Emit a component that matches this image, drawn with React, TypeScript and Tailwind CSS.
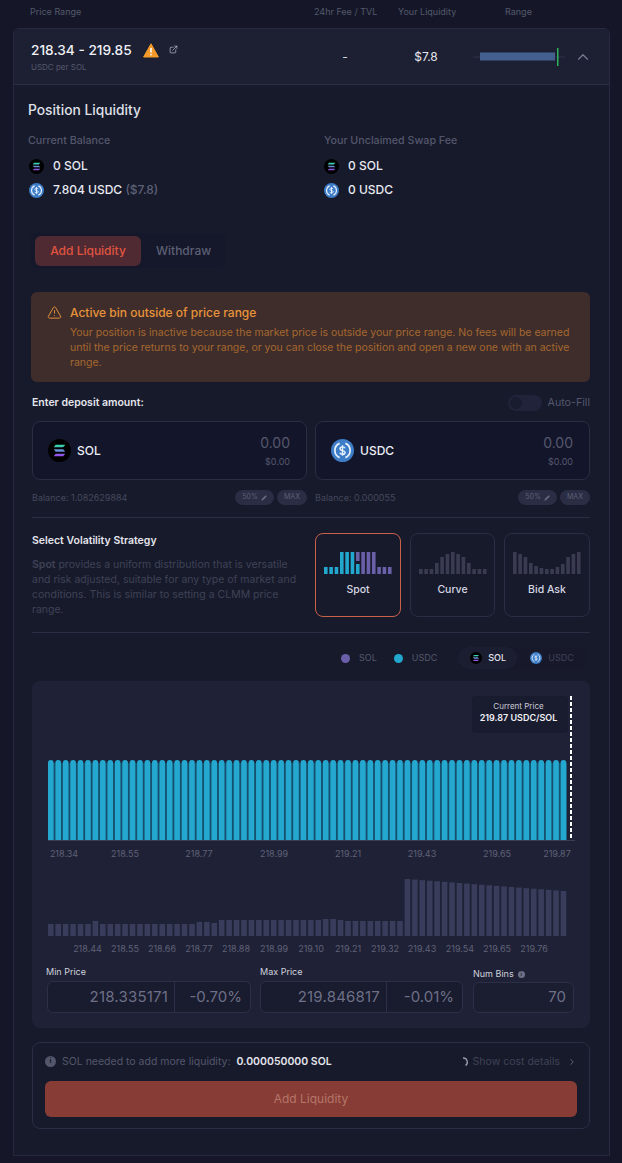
import { ChevronRight, ChevronUp, ExternalLink, Pencil, TriangleAlert } from "lucide-react";

const SolIcon = ({ size = 15 }: { size?: number }) => (
  <svg width={size} height={size} viewBox="0 0 24 24" className="shrink-0">
    <defs>
      <linearGradient id="solgrad" x1="0" y1="0" x2="0" y2="1">
        <stop offset="0" stopColor="#2fe0a8" />
        <stop offset="0.5" stopColor="#6a8fd8" />
        <stop offset="1" stopColor="#9a45f0" />
      </linearGradient>
    </defs>
    <circle cx="12" cy="12" r="12" fill="#000" />
    <path d="M8 6h10l-2.2 2.6H6zM6 10.7h9.8l2.2 2.6H8zM8 15.4h10l-2.2 2.6H6z" fill="url(#solgrad)" />
  </svg>
);

const UsdcIcon = ({ size = 15 }: { size?: number }) => (
  <svg width={size} height={size} viewBox="0 0 24 24" className="shrink-0">
    <circle cx="12" cy="12" r="12" fill="#3d7dc8" />
    <path d="M9 4.6a8 8 0 0 0 0 14.8M15 4.6a8 8 0 0 1 0 14.8" fill="none" stroke="#e6f0fb" strokeWidth="1.8" />
    <path d="M14.6 9.6c-.4-1-1.3-1.4-2.6-1.4-1.5 0-2.6.7-2.6 1.9 0 2.8 5.3 1.2 5.3 3.9 0 1.2-1.2 1.9-2.7 1.9s-2.4-.6-2.7-1.6M12 6.6v10.8" fill="none" stroke="#e6f0fb" strokeWidth="1.5" />
  </svg>
);

const spotBars = [7, 7, 7, 22, 22, 22, 22, 22, 22, 22, 7, 7, 7];
const curveBars = [5, 5, 5, 11, 17, 20, 22, 20, 17, 11, 5, 5, 5];
const bidAskBars = [22, 20, 17, 11, 8, 6, 5, 5, 7, 10, 17, 20, 22];

const MiniChart = ({ kind }: { kind: "spot" | "curve" | "bid" }) => {
  const bars = kind === "spot" ? spotBars : kind === "curve" ? curveBars : bidAskBars;
  return (
    <svg width="70" height="22" viewBox="0 0 70 22">
      {bars.map((h, i) => {
        const x = 1 + i * 5.33;
        if (kind === "spot" && i === 6) {
          return (
            <g key={i}>
              <rect x={x} y={0} width="3.6" height="9" fill="#6a60a9" />
              <rect x={x} y={12} width="3.6" height="10" fill="#22a8cf" />
            </g>
          );
        }
        const fill = kind === "spot" ? (i < 6 ? "#22a8cf" : "#6a60a9") : "#3a3b50";
        return <rect key={i} x={x} y={22 - h} width="3.6" height={h} fill={fill} />;
      })}
    </svg>
  );
};

const BIN_PITCH = 7.43;
const bins = Array.from({ length: 70 }, (_, i) => i);

const topLabels: [string, number][] = [
  ["218.34", 32],
  ["218.55", 93],
  ["218.77", 167],
  ["218.99", 242],
  ["219.21", 316],
  ["219.43", 390],
  ["219.65", 465],
  ["219.87", 525],
];

const lowerLabels: [string, number][] = [
  ["218.44", 55.5],
  ["218.55", 93],
  ["218.66", 130],
  ["218.77", 167],
  ["218.88", 204],
  ["218.99", 242],
  ["219.10", 279],
  ["219.21", 316],
  ["219.32", 353],
  ["219.43", 390],
  ["219.54", 428],
  ["219.65", 465],
  ["219.76", 502],
];

const smallHeights = [
  12, 12, 12, 12, 12, 12, 15, 12, 12, 12, 12, 12, 12, 12, 12, 12, 12, 12, 12, 12, 14, 14, 13, 16, 16, 16, 16, 16, 16, 16,
  16, 16, 16, 16, 16, 16, 16, 17, 17, 16, 15, 15, 15, 15, 15, 15, 15, 15,
];

const lowerHeight = (i: number) => (i < 48 ? smallHeights[i] : 57 - ((i - 48) * 12) / 21);

const PriceBox = ({ value, pct, width }: { value: string; pct: string; width: string }) => (
  <div className={`flex h-[32px] ${width} rounded-md border border-[#2c2f48] bg-[#191b2e] text-[15px] text-[#6d7086]`}>
    <div className="flex flex-1 items-center justify-end border-r border-[#2c2f48] pr-[6px] pt-[1px] tracking-[0.2px]">{value}</div>
    <div className="flex w-[75px] items-center justify-end pr-[8px] pt-[1px]">{pct}</div>
  </div>
);

const TokenInput = ({ icon, name }: { icon: React.ReactNode; name: string }) => (
  <div className="flex h-[59px] w-[275px] items-center justify-between rounded-lg border border-[#2a2d44] bg-[#13152a] pl-[15px] pr-[16px]">
    <div className="flex items-center gap-[6px] text-[12px] font-medium text-[#eceef5]">
      {icon}
      {name}
    </div>
    <div className="flex flex-col items-end">
      <span className="text-[14px] leading-[20px] text-[#55586d]">0.00</span>
      <span className="mt-[3px] text-[9px] leading-[12px] text-[#55586d]">$0.00</span>
    </div>
  </div>
);

const BalanceRow = ({ balance }: { balance: string }) => (
  <div className="flex h-[15px] w-[275px] items-center justify-between">
    <span className="pt-[1px] text-[9px] text-[#45485c]">{balance}</span>
    <div className="flex gap-[3px]">
      <span className="flex h-[15px] w-[39px] items-center justify-center gap-[3px] rounded-full bg-[#2a2d44] text-[7px] text-[#5d6075]">
        50%
        <Pencil size={6} fill="#6d7086" strokeWidth={1} />
      </span>
      <span className="flex h-[15px] w-[30px] items-center justify-center rounded-full bg-[#2a2d44] text-[7px] text-[#5d6075]">
        MAX
      </span>
    </div>
  </div>
);

const StrategyCard = ({
  label,
  kind,
  width,
  active,
}: {
  label: string;
  kind: "spot" | "curve" | "bid";
  width: string;
  active?: boolean;
}) => (
  <div
    className={`flex h-[84px] ${width} flex-col items-center rounded-lg border pt-[18px] ${
      active ? "border-[#c9604a]" : "border-[#2a2d44]"
    }`}
  >
    <MiniChart kind={kind} />
    <span className="mt-[9px] text-[10.5px] font-medium leading-[14px] text-[#d5d7e2]">{label}</span>
  </div>
);

export default function App() {
  return (
    <div className="h-[1163px] w-[622px] overflow-hidden bg-[#151728] [font-family:Inter,sans-serif]">
      {/* Column heads */}
      <div className="flex h-[28px] pb-[4px] pl-[30px] text-[9px] text-[#54576b]">
        <div className="flex w-[284px] items-center">Price Range</div>
        <div className="flex w-[84px] items-center">24hr Fee / TVL</div>
        <div className="flex w-[107px] items-center">Your Liquidity</div>
        <div className="flex items-center">Range</div>
      </div>

      <div className="ml-[13px] w-[597px] rounded-t-md border border-[#262940] bg-[#171a2b]">
        {/* Position row */}
        <div className="flex h-[56px] items-center rounded-t-md border-b border-[#2a2d44] bg-[#1d2033] pl-[17px]">
          <div className="w-[283px]">
            <div className="flex items-center text-[13.7px] font-medium leading-[18px] text-[#f0f1f6]">
              218.34 - 219.85
              <svg width="16" height="15" viewBox="0 0 16 15" className="ml-[11px]">
                <path d="M8 .8 15.4 14H.6z" fill="#f39a2b" stroke="#f39a2b" strokeWidth="1" strokeLinejoin="round" />
                <path d="M8 5v4.6" stroke="#fff" strokeWidth="1.6" />
                <circle cx="8" cy="11.6" r="0.9" fill="#fff" />
              </svg>
              <ExternalLink size={9} strokeWidth={1.6} className="mb-[1px] ml-[10px] text-[#d5d7e2]" />
            </div>
            <div className="mt-[3px] text-[8px] leading-[10px] text-[#54576b]">USDC per SOL</div>
          </div>
          <div className="w-[62px] text-center text-[12px] text-[#d5d7e2]">-</div>
          <div className="w-[97px] pl-[3px] text-center text-[12px] text-[#e6e7ee]">$7.8</div>
          <svg width="95" height="20" viewBox="0 0 95 20">
            <line x1="0" y1="10" x2="92" y2="10" stroke="#2f3248" strokeWidth="1" />
            <rect x="7" y="5.5" width="75" height="8" fill="#44608f" />
            <rect x="84" y="1" width="1.5" height="18" fill="#2fb35a" />
          </svg>
          <ChevronUp size={18} strokeWidth={1.5} className="ml-[6px] text-[#7b7e92]" />
        </div>

        {/* Position body */}
        <div className="pb-[26px] pl-[14px] pt-[15px]">
          <div className="text-[13.8px] font-medium leading-[20px] text-[#dfe0e8]">Position Liquidity</div>
          <div className="mt-[14px] flex">
            <div className="w-[296px]">
              <div className="text-[10.7px] font-medium leading-[14px] text-[#54576b]">Current Balance</div>
              <div className="mt-[9px] flex h-[18px] items-center gap-[9px] pl-[1px] text-[12px] font-medium text-[#e9eaf1]">
                <SolIcon />0 SOL
              </div>
              <div className="mt-[6px] flex h-[18px] items-center gap-[9px] pl-[1px] text-[12px] font-medium text-[#e9eaf1]">
                <UsdcIcon />
                <span>
                  7.804 USDC <span className="text-[#5d6075]">($7.8)</span>
                </span>
              </div>
            </div>
            <div>
              <div className="text-[10.7px] font-medium leading-[14px] text-[#54576b]">Your Unclaimed Swap Fee</div>
              <div className="mt-[9px] flex h-[18px] items-center gap-[9px] text-[12px] font-medium text-[#e9eaf1]">
                <SolIcon />0 SOL
              </div>
              <div className="mt-[6px] flex h-[18px] items-center gap-[9px] text-[12px] font-medium text-[#e9eaf1]">
                <UsdcIcon />0 USDC
              </div>
            </div>
          </div>

          {/* Tabs */}
          <div className="ml-[2px] mt-[34px] flex h-[35px] w-[196px] items-center rounded-lg bg-[#15172a] pl-[5px]">
            <div className="flex h-[30px] w-[106px] items-center justify-center rounded-md bg-[#4f2a33] text-[12px] font-medium text-[#e0553f]">
              Add Liquidity
            </div>
            <div className="ml-[15px] text-[12px] font-medium text-[#5d6075]">Withdraw</div>
          </div>

          {/* Alert */}
          <div className="ml-[3px] mt-[24px] flex h-[90px] w-[559px] rounded-md bg-[#3f2d2b] pl-[16px] pt-[13px]">
            <TriangleAlert size={15} strokeWidth={1.5} className="shrink-0 text-[#e8933a]" />
            <div className="ml-[8px]">
              <div className="text-[12px] font-medium leading-[16px] text-[#e8933a]">Active bin outside of price range</div>
              <p className="mt-[4px] w-[505px] text-[10.5px] leading-[15px] text-[#a5682f]">
                Your position is inactive because the market price is outside your price range. No fees will be earned
                until the price returns to your range, or you can close the position and open a new one with an active
                range.
              </p>
            </div>
          </div>

          {/* Deposit */}
          <div className="ml-[4px] mt-[13px] w-[558px]">
            <div className="flex h-[16px] items-center justify-between">
              <span className="text-[10.5px] font-semibold text-[#e4e5ec]">Enter deposit amount:</span>
              <div className="flex items-center gap-[6px]">
                <span className="flex h-[16px] w-[34px] items-center rounded-full bg-[#20233a] pl-[2px]">
                  <span className="h-[12px] w-[12px] rounded-full bg-[#191b2e]" />
                </span>
                <span className="text-[10.7px] text-[#54576b]">Auto-Fill</span>
              </div>
            </div>
            <div className="mt-[10px] flex justify-between">
              <TokenInput icon={<SolIcon size={23} />} name="SOL" />
              <TokenInput icon={<UsdcIcon size={23} />} name="USDC" />
            </div>
            <div className="mt-[10px] flex justify-between">
              <BalanceRow balance="Balance: 1.082629884" />
              <BalanceRow balance="Balance: 0.000055" />
            </div>
            <div className="mt-[12px] h-px bg-[#2a2d44]" />

            {/* Strategy */}
            <div className="mt-[15px] flex justify-between">
              <div className="w-[265px] pt-[1px]">
                <div className="text-[10.5px] font-semibold leading-[14px] text-[#e4e5ec]">Select Volatility Strategy</div>
                <p className="mt-[9px] text-[10.5px] leading-[15px] text-[#3f4256]">
                  <span className="font-semibold">Spot</span> provides a uniform distribution that is versatile and risk
                  adjusted, suitable for any type of market and conditions. This is similar to setting a CLMM price range.
                </p>
              </div>
              <div className="flex gap-[9px]">
                <StrategyCard label="Spot" kind="spot" width="w-[86px]" active />
                <StrategyCard label="Curve" kind="curve" width="w-[85px]" />
                <StrategyCard label="Bid Ask" kind="bid" width="w-[86px]" />
              </div>
            </div>
            <div className="mt-[15px] h-px bg-[#2a2d44]" />

            {/* Legend */}
            <div className="mt-[14px] flex h-[22px] items-center pl-[309px] text-[9px] text-[#54576b]">
              <span className="h-[9px] w-[9px] rounded-full bg-[#6a60a9]" />
              <span className="ml-[9px]">SOL</span>
              <span className="ml-[17px] h-[9px] w-[9px] rounded-full bg-[#22a8cf]" />
              <span className="ml-[9px]">USDC</span>
              <div className="ml-[21px] flex h-[22px] items-center rounded-full bg-[#17192b]">
                <div className="flex h-[22px] w-[59px] items-center gap-[6px] rounded-full bg-[#1b1d31] pl-[12px] font-medium text-[#e4e5ec]">
                  <SolIcon size={12} />
                  SOL
                </div>
                <div className="flex w-[70px] items-center gap-[6px] pl-[13px] text-[#3f4256]">
                  <UsdcIcon size={12} />
                  USDC
                </div>
              </div>
            </div>

            {/* Chart panel */}
            <div className="relative mt-[12px] h-[347px] rounded-lg bg-[#1f2136]">
              <svg width="558" height="180" viewBox="0 0 558 180" className="block">
                <rect x="16" y="82" width="519" height="77" fill="#15506e" />
                {bins.map((i) => {
                  const x = 16 + i * BIN_PITCH;
                  return (
                    <path key={i} d={`M${x} 159V81.8a2.8 2.8 0 0 1 5.6 0V159z`} fill="#25a8d0" />
                  );
                })}
                <rect x="16" y="159" width="527" height="1" fill="#3a3d55" />
                <line x1="539" y1="15" x2="539" y2="159" stroke="#fff" strokeWidth="2" strokeDasharray="4 2" />
                {topLabels.map(([t, x]) => (
                  <text key={t} x={x} y="176" textAnchor="middle" fontSize="9" fill="#5f6277">
                    {t}
                  </text>
                ))}
              </svg>
              <svg width="558" height="96" viewBox="0 0 558 96" className="block">
                {bins.map((i) => {
                  const h = lowerHeight(i);
                  return <rect key={i} x={16 + i * BIN_PITCH} y={75 - h} width="5.6" height={h} fill="#393c5a" />;
                })}
                {lowerLabels.map(([t, x]) => (
                  <text key={t} x={x} y="91" textAnchor="middle" fontSize="9" fill="#5f6277">
                    {t}
                  </text>
                ))}
              </svg>

              {/* Current price tooltip */}
              <div className="absolute left-[440px] top-[15px] flex h-[37px] w-[96px] flex-col items-center rounded bg-[#191b2e] pr-[3px] pt-[4px] text-[8px] leading-[12px] text-[#c9cbd6]">
                Current Price
                <span className="text-[9px] font-semibold text-[#f0f1f6]">219.87 USDC/SOL</span>
              </div>

              {/* Price inputs */}
              <div className="mt-[8px] flex items-end pl-[15px]">
                <div className="w-[204px]">
                  <div className="mb-[2px] ml-[-1px] text-[9px] leading-[14px] text-[#cfd1dc]">Min Price</div>
                  <PriceBox value="218.335171" pct="-0.70%" width="w-[204px]" />
                </div>
                <div className="ml-[9px] w-[203px]">
                  <div className="mb-[2px] text-[9px] leading-[14px] text-[#cfd1dc]">Max Price</div>
                  <PriceBox value="219.846817" pct="-0.01%" width="w-[203px]" />
                </div>
                <div className="ml-[10px] w-[101px]">
                  <div className="mb-[1px] flex items-center gap-[4px] text-[9px] leading-[14px] text-[#cfd1dc]">
                    Num Bins
                    <span className="flex h-[7px] w-[7px] items-center justify-center rounded-full bg-[#6d7086] text-[5px] font-bold text-[#1f2136]">
                      i
                    </span>
                  </div>
                  <div className="flex h-[31px] items-center justify-end rounded-md border border-[#2c2f48] bg-[#1b1d31] pr-[7px] text-[15px] text-[#6d7086]">
                    70
                  </div>
                </div>
              </div>
            </div>

            {/* Footer action */}
            <div className="mt-[14px] h-[87px] rounded-lg border border-[#2a2d44] px-[12px] pt-[10px]">
              <div className="flex h-[17px] items-center text-[10.5px]">
                <span className="flex h-[11px] w-[11px] items-center justify-center rounded-full bg-[#54576b] text-[7px] font-bold text-[#171a2b]">
                  i
                </span>
                <span className="ml-[6px] text-[#54576b]">SOL needed to add more liquidity:</span>
                <span className="ml-[6px] font-semibold text-[#e4e5ec]">0.000050000 SOL</span>
                <svg width="8" height="10" viewBox="0 0 8 10" className="ml-auto">
                  <path d="M1 1a4.2 4.2 0 0 1 2.6 7.6" fill="none" stroke="#9a9cac" strokeWidth="1.3" />
                </svg>
                <span className="ml-[3px] text-[#3f4256]">Show cost details</span>
                <ChevronRight size={10} strokeWidth={2} className="ml-[7px] text-[#6d7086]" />
              </div>
              <div className="mt-[11px] flex h-[36px] items-center justify-center rounded-md bg-[#873c35] text-[12px] text-[#b5766a]">
                Add Liquidity
              </div>
            </div>
          </div>
        </div>
      </div>
    </div>
  );
}
